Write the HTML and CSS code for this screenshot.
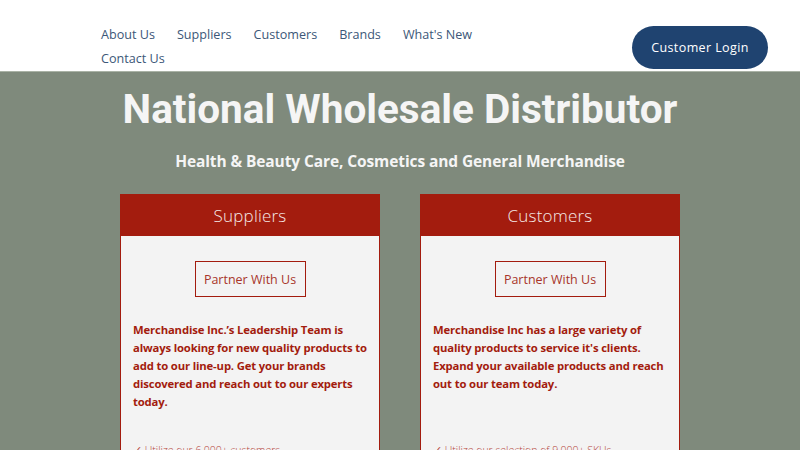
FILE: index.html
```html
<!DOCTYPE html>
<html>
<head>
<meta charset="utf-8">
<link rel="stylesheet" href="styles.css">
</head>
<body>
<header class="site-header">
  <div class="header-inner">
    <nav class="nav">
      <a href="#">About Us</a>
      <a href="#">Suppliers</a>
      <a href="#">Customers</a>
      <a href="#">Brands</a>
      <a href="#">What's New</a>
      <a href="#">Contact Us</a>
    </nav>
    <a class="login" href="#">Customer Login</a>
  </div>
</header>
<main class="hero">
  <h1 class="title">National Wholesale Distributor</h1>
  <p class="subtitle">Health &amp; Beauty Care, Cosmetics and General Merchandise</p>
  <div class="cards">
    <section class="card">
      <h2 class="card-head">Suppliers</h2>
      <div class="card-body">
        <a class="partner" href="#">Partner With Us</a>
        <p class="card-text">Merchandise Inc.’s Leadership Team is always looking for new quality products to add to our line-up. Get your brands discovered and reach out to our experts today.</p>
        <ul class="list">
          <li>✓ Utilize our 6,000+ customers</li>
        </ul>
      </div>
    </section>
    <section class="card">
      <h2 class="card-head">Customers</h2>
      <div class="card-body">
        <a class="partner" href="#">Partner With Us</a>
        <p class="card-text">Merchandise Inc has a large variety of quality products to service it's clients. Expand your available products and reach out to our team today.</p>
        <ul class="list list-2">
          <li>✓ Utilize our selection of 9,000+ SKUs</li>
        </ul>
      </div>
    </section>
  </div>
</main>
</body>
</html>
```

FILE: styles.css
```css
* { box-sizing: border-box; }
html, body { margin: 0; padding: 0; }
body {
  width: 800px;
  height: 450px;
  overflow: hidden;
  background: #7f8a7c;
  font-family: "Open Sans", "Liberation Sans", sans-serif;
}
a { text-decoration: none; }

.site-header {
  background: #ffffff;
  height: 72px;
  border-bottom: 1px solid #aab3a6;
}
.header-inner {
  display: flex;
  justify-content: space-between;
  align-items: flex-start;
  padding: 23px 32px 0 101px;
}
.nav {
  display: flex;
  flex-wrap: wrap;
  column-gap: 22px;
  width: 400px;
  font-size: 12.6px;
  line-height: 24px;
  letter-spacing: 0;
}
.nav a { color: #3c5778; }
.login {
  margin-top: 3px;
  width: 136px;
  height: 43px;
  border-radius: 22px;
  background: #1f4370;
  color: #ffffff;
  font-size: 12.5px;
  font-weight: 500;
  letter-spacing: 0.4px;
  display: flex;
  align-items: center;
  justify-content: center;
}

.hero {
  display: flex;
  flex-direction: column;
  align-items: center;
}
.title {
  margin: 13px 0 0;
  font-family: Roboto, "Liberation Sans", sans-serif;
  font-weight: 700;
  font-size: 40.5px;
  line-height: 48px;
  color: #f5f5f5;
}
.subtitle {
  margin: 17px 0 0;
  font-size: 15.5px;
  font-weight: 700;
  line-height: 22px;
  color: #f5f5f5;
  letter-spacing: -0.1px;
}
.cards {
  margin-top: 22px;
  display: grid;
  grid-template-columns: 260px 260px;
  column-gap: 40px;
}
.card {
  background: #f3f3f3;
  border: 1.5px solid #a31c0e;
  border-top: none;
  height: 260px;
}
.card-head {
  margin: 0;
  height: 42px;
  background: #a31c0e;
  color: #f5e9e7;
  font-weight: 300;
  font-size: 17px;
  display: flex;
  align-items: center;
  justify-content: center;
  letter-spacing: 0.2px;
}
.card-body {
  display: flex;
  flex-direction: column;
  align-items: center;
  padding: 25px 12px 0 12px;
}
.partner {
  width: 111px;
  height: 36px;
  border: 1.5px solid #a31c0e;
  color: #a8352a;
  font-size: 12.5px;
  display: flex;
  align-items: center;
  justify-content: center;
}
.card-text {
  align-self: stretch;
  margin: 24px 0 0;
  color: #a31c0e;
  font-weight: 700;
  font-size: 11.3px;
  line-height: 18px;
  letter-spacing: -0.15px;
  min-height: 108px;
}
.list {
  align-self: stretch;
  list-style: none;
  margin: 14px 0 0;
  padding: 0;
  color: #b5453a;
  font-size: 10.5px;
  font-weight: 300;
}
```
